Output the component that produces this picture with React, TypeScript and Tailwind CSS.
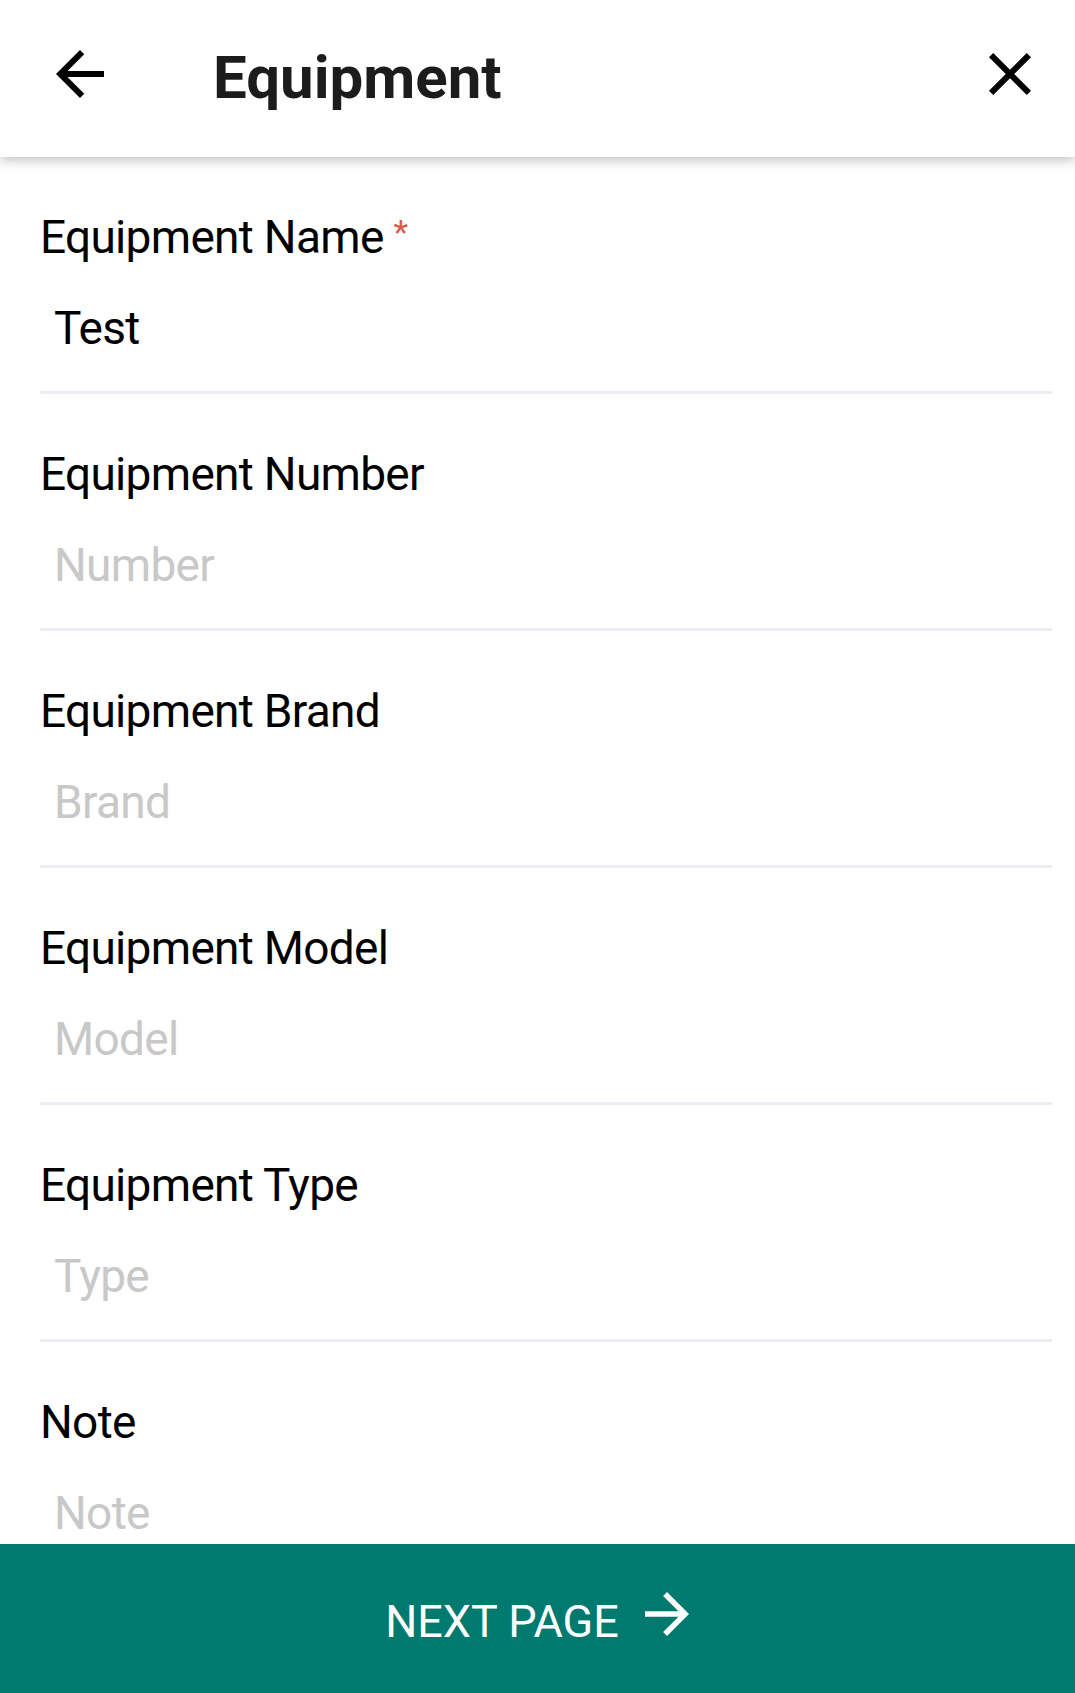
import { ReactNode } from 'react'

function BackIcon() {
  return (
    <svg viewBox="0 0 24 24" className="w-[72px] h-[72px]" fill="#000">
      <path d="M20 11H7.83l5.59-5.59L12 4l-8 8 8 8 1.41-1.41L7.83 13H20v-2z" />
    </svg>
  )
}

function CloseIcon() {
  return (
    <svg viewBox="0 0 24 24" className="w-[72px] h-[72px]" fill="#000">
      <path d="M19 6.41L17.59 5 12 10.59 6.41 5 5 6.41 10.59 12 5 17.59 6.41 19 12 13.41 17.59 19 19 17.59 13.41 12z" />
    </svg>
  )
}

function ArrowForward() {
  return (
    <svg viewBox="0 0 24 24" className="w-[66px] h-[66px]" fill="#fff">
      <path d="M12 4l-1.41 1.41L16.17 11H4v2h12.17l-5.58 5.59L12 20l8-8z" />
    </svg>
  )
}

function Field({ label, value, placeholder, required }: { label: ReactNode; value?: string; placeholder: string; required?: boolean }) {
  return (
    <div className="pl-[40px] pr-[23px] pt-[52px]">
      <div className="flex items-start text-[46px] leading-[56px] tracking-[-0.7px] text-black">
        <span>{label}</span>
        {required && <span className="ml-[10px] mt-[8px] text-[34px] leading-[30px] text-[#db5a4a]">*</span>}
      </div>
      <div className={`pl-[14px] mt-[35px] text-[46px] leading-[56px] tracking-[-0.7px] ${value ? 'text-black' : 'text-[#c8c8c8]'}`}>
        {value || placeholder}
      </div>
      <div className="mt-[35px] h-[3px] bg-[#ececf2]" />
    </div>
  )
}

export default function App() {
  const fields = [
    { label: 'Equipment Name', value: 'Test', placeholder: 'Name', required: true },
    { label: 'Equipment Number', placeholder: 'Number' },
    { label: 'Equipment Brand', placeholder: 'Brand' },
    { label: 'Equipment Model', placeholder: 'Model' },
    { label: 'Equipment Type', placeholder: 'Type' },
  ]

  return (
    <div className="h-screen flex flex-col bg-white overflow-hidden" style={{ fontFamily: 'Roboto, "Liberation Sans", sans-serif' }}>
      <header className="relative z-10 h-[157px] shrink-0 flex items-center pb-[10px] bg-white shadow-[0_4px_10px_rgba(0,0,0,0.22)]">
        <button className="ml-[44px] flex items-center justify-center">
          <BackIcon />
        </button>
        <h1 className="ml-[97px] pt-[8px] text-[60px] leading-[72px] font-bold text-[#1c1c1c]">Equipment</h1>
        <button className="ml-auto mr-[29px] flex items-center justify-center">
          <CloseIcon />
        </button>
      </header>

      <main className="flex-1 overflow-hidden">
        {fields.map(f => (
          <Field key={f.label} label={f.label} value={f.value} placeholder={f.placeholder} required={f.required} />
        ))}
        <div className="pl-[40px] pr-[23px] pt-[52px]">
          <div className="text-[46px] leading-[56px] tracking-[-0.7px] text-black">Note</div>
          <div className="pl-[14px] mt-[35px] text-[46px] leading-[56px] tracking-[-0.7px] text-[#c8c8c8]">Note</div>
        </div>
      </main>

      <footer className="h-[149px] shrink-0 bg-[#00796f] flex items-center justify-center pl-[10px]">
        <span className="pt-[6px] text-[45px] leading-[53px] text-white">NEXT PAGE</span>
        <span className="ml-[15px] pb-[9px] flex items-center">
          <ArrowForward />
        </span>
      </footer>
    </div>
  )
}
